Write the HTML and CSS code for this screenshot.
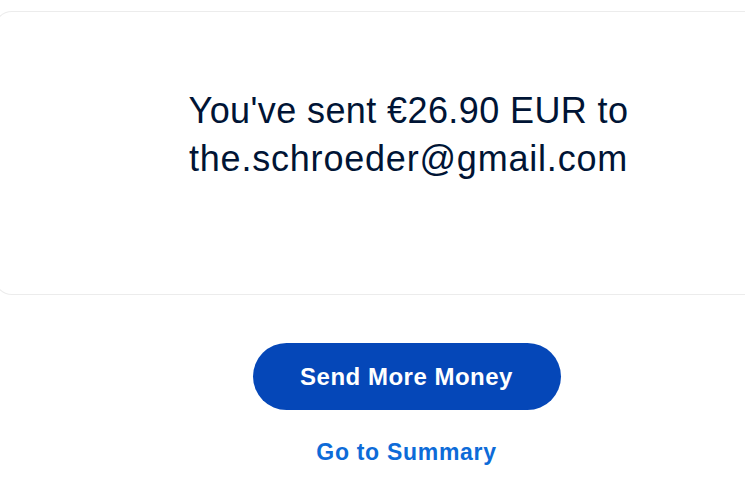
FILE: index.html
```html
<!DOCTYPE html>
<html>
<head>
<meta charset="utf-8">
<link rel="stylesheet" href="styles.css">
</head>
<body>
<main class="page">
  <section class="card">
    <p class="message"><span class="line-1">You've sent €26.90 EUR to</span><br><span class="line-2">the.schroeder@gmail.com</span></p>
  </section>
  <div class="actions">
    <button class="btn-primary">Send More Money</button>
    <a class="link" href="#">Go to Summary</a>
  </div>
</main>
</body>
</html>
```
FILE: styles.css
```css
html, body {
  margin: 0;
  padding: 0;
  background: #ffffff;
}
body {
  font-family: "Liberation Sans", Arial, sans-serif;
  color: #001435;
  overflow: hidden;
}
.page {
  width: 745px;
  padding-top: 11px;
}
.card {
  margin-left: -6px;
  width: 751px;
  height: 284px;
  border: 1px solid #ececec;
  border-right: none;
  border-radius: 18px 0 0 18px;
  box-sizing: border-box;
  display: flex;
  align-items: flex-start;
  justify-content: center;
  padding: 75px 0 0 77px;
}
.message {
  margin: 0;
  font-size: 36px;
  line-height: 48px;
  text-align: center;
  font-weight: 400;
}
.line-1 {
  letter-spacing: 0.4px;
}
.line-2 {
  letter-spacing: 0.8px;
}
.actions {
  display: flex;
  flex-direction: column;
  align-items: center;
  padding-left: 68px;
  padding-top: 48px;
}
.btn-primary {
  width: 308px;
  height: 67px;
  border: none;
  border-radius: 34px;
  background: #0547b8;
  color: #ffffff;
  font-family: "Liberation Sans", Arial, sans-serif;
  font-weight: 700;
  font-size: 24px;
  letter-spacing: 0.5px;
}
.link {
  margin-top: 29px;
  color: #0d6bd8;
  font-weight: 700;
  font-size: 23px;
  letter-spacing: 0.7px;
  text-decoration: none;
}
```
